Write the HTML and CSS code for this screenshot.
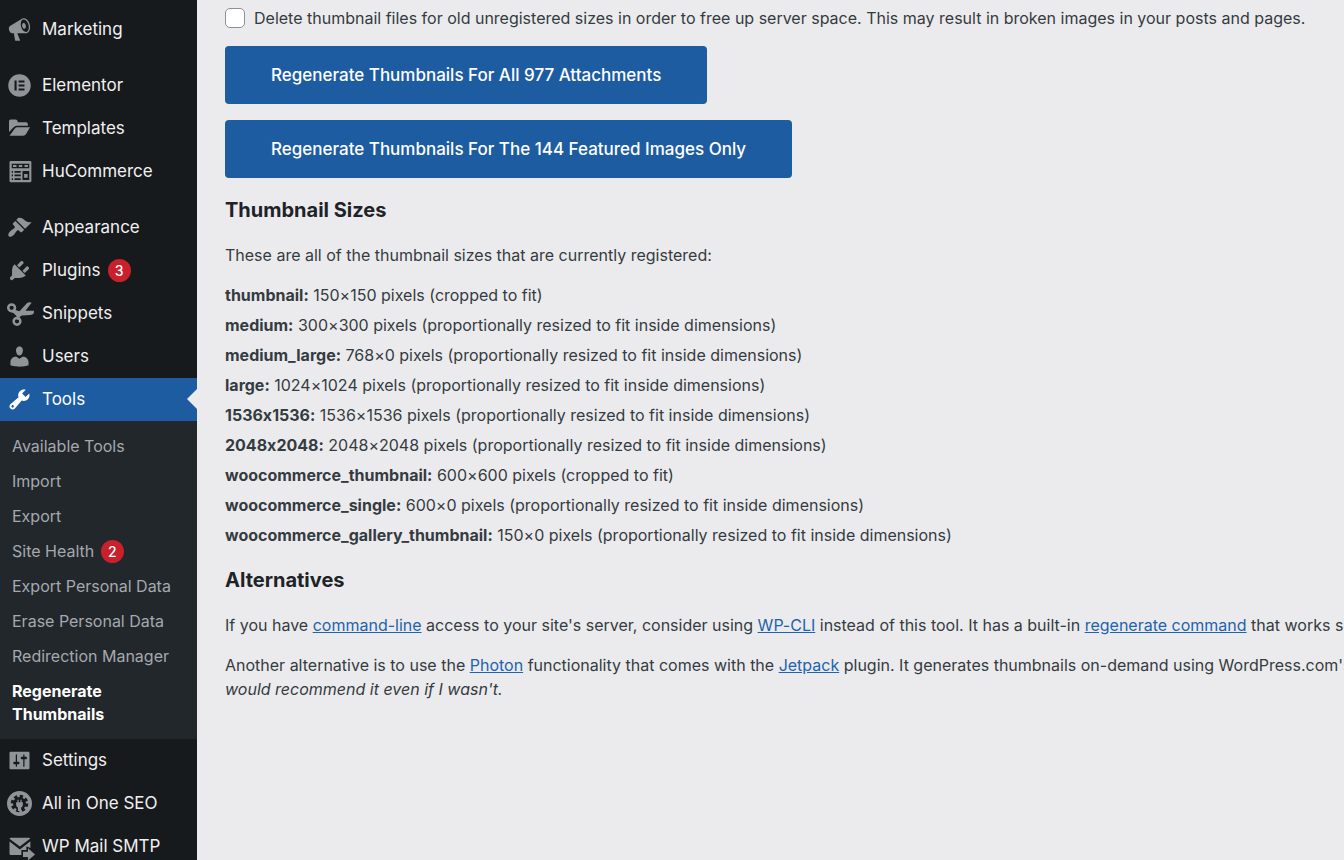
FILE: index.html
```
<!DOCTYPE html>
<html lang="en">
<head>
    <meta charset="UTF-8">
    <meta name="viewport" content="width=device-width, initial-scale=1.0">
    <title>Regenerate Thumbnails</title>
    <link rel="stylesheet" href="styles.css">
</head>
<body>
    <nav class="admin-menu">
        <a class="menu-item" href="#marketing">
            <svg class="icon" viewBox="0 0 20 20"><path d="M18.15 5.94c.46 1.62.38 3.22-.02 4.48-.42 1.28-1.26 2.18-2.3 2.48-.16.06-.26.06-.4.06-.06.02-.12.02-.18.02-.06.02-.14.02-.22.02h-6.8l2.22 5.5c.02.14-.06.26-.14.34-.08.1-.24.16-.34.16H6.95c-.1 0-.26-.06-.34-.16-.08-.08-.16-.2-.14-.34l-1-5.5H4.25l-.02-.02c-.5.06-1.08-.18-1.54-.62s-.88-1.08-1.06-1.88c-.24-.8-.2-1.56-.02-2.2.18-.62.58-1.08 1.06-1.3l.02-.02 9-5.4c.1-.06.18-.1.24-.16.06-.04.14-.08.24-.12.16-.08.28-.12.5-.18 1.04-.3 2.24.1 3.22.98s1.84 2.24 2.26 3.86zm-2.58 5.98h-.02c.4-.1.74-.34 1.04-.7.58-.7.86-1.76.86-3.04 0-.64-.1-1.3-.28-1.98-.34-1.36-1.02-2.5-1.78-3.24s-1.68-1.1-2.46-.88c-.82.22-1.4.96-1.7 2-.32 1.04-.28 2.36.06 3.72.38 1.36 1 2.5 1.8 3.24.78.74 1.62 1.1 2.48.88zm-2.54-7.08c.22-.04.42-.02.62.04.38.16.76.48 1.02 1s.42 1.2.42 1.78c0 .3-.04.56-.12.8-.18.48-.44.84-.86.94-.34.1-.8-.06-1.14-.4s-.64-.86-.78-1.5c-.18-.62-.12-1.24.02-1.72s.48-.84.82-.94z"/></svg>
            Marketing
        </a>

        <a class="menu-item group-start" href="#elementor">
            <svg class="icon" viewBox="0 0 20 20"><path fill-rule="evenodd" d="M10 1a9 9 0 1 0 0 18a9 9 0 0 0 0-18zM6 6h1.7v8H6zM9.3 6H14v1.6H9.3zM9.3 9.2H14v1.6H9.3zM9.3 12.4H14V14H9.3z"/></svg>
            Elementor
        </a>
        <a class="menu-item" href="#templates">
            <svg class="icon" viewBox="0 0 20 20"><path d="M1.6 12.8V4.2q0-1.4 1.4-1.4h3.9q1.3 0 1.5 1.2l.2.9h6.600q1.5 0 1.5 1.600v1.300H8q-1.800 0-2.900 1.400zM2 15.700l4.300-5.800q.7-.9 1.900-.9h10.200l-3 5.200q-.9 1.500-2.500 1.500z"/></svg>
            Templates
        </a>
        <a class="menu-item" href="#hucommerce">
            <svg class="icon" viewBox="0 0 20 20"><path fill-rule="evenodd" d="M3 1.500h15.500q1 0 1 1v15q0 1-1 1H3q-1 0-1-1v-15q0-1 1-1zM3.800 3.800v3.600h14V3.800zM3.800 9.500v1.400h1V9.500zM6 9.500v1.400h5V9.500zM3.800 12.400v1.400h1v-1.400zM6 12.400v1.400h5v-1.400zM3.800 15.300v1.400h1v-1.400zM6 15.300v1.400h5v-1.400zM12.400 9.500v7.200h5.400V9.500z"/><path d="M4.800 4.800h2.800v1.600H4.800zM9.400 4.800h2.800v1.600H9.400zM14 4.800h2.800v1.600H14zM13.700 12h2.800v3h-2.800z"/></svg>
            HuCommerce
        </a>

        <a class="menu-item group-start" href="#appearance">
            <svg class="icon" viewBox="0 0 20 20"><path d="M14.48 11.06L7.41 3.99l1.5-1.5c.5-.56 2.3-.47 3.51.32 1.21.8 1.43 1.28 2.91 2.1 1.18.64 2.45 1.26 4.45.85zm-.71.71L6.7 4.7 4.93 6.47c-.39.39-.39 1.02 0 1.41l1.06 1.06c.39.39.39 1.03 0 1.42-.6.6-1.43 1.11-2.21 1.69-.35.26-.7.53-1.01.84C1.43 14.23.4 16.08 1.4 17.07c.99 1 2.84-.03 4.18-1.36.31-.31.58-.66.85-1.02.57-.78 1.08-1.61 1.69-2.21.39-.39 1.02-.39 1.41 0l1.06 1.06c.39.39 1.02.39 1.41 0z"/></svg>
            Appearance
        </a>
        <a class="menu-item" href="#plugins">
            <svg class="icon" viewBox="0 0 20 20"><path d="M13.11 4.36L9.87 7.6 8 5.73l3.24-3.24c.35-.34 1.05-.2 1.56.32.52.51.66 1.21.31 1.55zm-8 1.77l.91-1.12 9.01 9.01-1.19.84c-.71.71-2.63 1.16-3.82 1.16H6.14L4.9 17.26c-.59.59-1.54.59-2.12 0-.59-.58-.59-1.53 0-2.12l1.24-1.24v-3.88c0-1.13.4-3.19 1.09-3.89zm7.26 3.97l3.24-3.24c.34-.35 1.04-.21 1.55.31.52.51.66 1.21.31 1.55l-3.24 3.25z"/></svg>
            Plugins <span class="badge">3</span>
        </a>
        <a class="menu-item" href="#snippets">
            <svg class="icon" viewBox="0 0 20 20"><circle class="ring" cx="3.700" cy="5.400" r="2.700"/><circle class="ring" cx="8" cy="16.200" r="2.700"/><path d="M5.500 6.800l4.500 1.400 5.700-6.200q1.600-1.500 4-.6l-4.900 6.400h6.700q.6 3-2.800 3.400l-6.900.3-1.900 1.500-.3 2-1.800-.3-.2-2.700-2.500-2.500-1.500-.6z"/></svg>
            Snippets
        </a>
        <a class="menu-item" href="#users">
            <svg class="icon" viewBox="0 0 20 20"><path d="M10 9.25c-2.27 0-2.73-3.44-2.73-3.44C7 4.02 7.82 2 9.97 2c2.16 0 2.98 2.02 2.71 3.81 0 0-.41 3.44-2.68 3.44zm0 2.57L12.72 10c2.39 0 4.52 2.33 4.52 4.53v2.49s-3.65 1.13-7.24 1.13c-3.65 0-7.24-1.13-7.24-1.13v-2.49c0-2.25 1.94-4.48 4.47-4.48z"/></svg>
            Users
        </a>
        <a class="menu-item current" href="#tools">
            <svg class="icon" viewBox="0 0 20 20"><path d="M16.68 9.77c-1.34 1.34-3.3 1.67-4.95.99l-5.41 6.52c-.99.99-2.59.99-3.58 0s-.99-2.59 0-3.57l6.52-5.42c-.68-1.65-.35-3.61.99-4.95 1.28-1.28 3.12-1.62 4.72-1.06l-2.89 2.89 2.82 2.82 2.86-2.87c.53 1.58.18 3.39-1.08 4.65zM3.81 16.21c.4.39 1.04.39 1.43 0 .4-.4.4-1.04 0-1.43-.39-.4-1.03-.4-1.43 0-.39.39-.39 1.03 0 1.43z"/></svg>
            Tools
        </a>
        <div class="submenu">
            <a href="#available">Available Tools</a>
            <a href="#import">Import</a>
            <a href="#export">Export</a>
            <a href="#health">Site Health <span class="badge">2</span></a>
            <a href="#export-data">Export Personal Data</a>
            <a href="#erase-data">Erase Personal Data</a>
            <a href="#redirection">Redirection Manager</a>
            <a class="active" href="#regenerate">Regenerate<br>Thumbnails</a>
        </div>
        <a class="menu-item" href="#settings">
            <svg class="icon" viewBox="0 0 20 20"><path d="M18 16V4c0-.55-.45-1-1-1H3c-.55 0-1 .45-1 1v12c0 .55.45 1 1 1h14c.55 0 1-.45 1-1zM8 11h1c.55 0 1 .45 1 1s-.45 1-1 1H8v1.5c0 .28-.22.5-.5.5s-.5-.22-.5-.5V13H6c-.55 0-1-.45-1-1s.45-1 1-1h1V5.5c0-.28.22-.5.5-.5s.5.22.5.5V11zm5-2h-1c-.55 0-1-.45-1-1s.45-1 1-1h1V5.5c0-.28.22-.5.5-.5s.5.22.5.5V7h1c.55 0 1 .45 1 1s-.45 1-1 1h-1v5.5c0 .28-.22.5-.5.5s-.5-.22-.5-.5V9z"/></svg>
            Settings
        </a>
        <a class="menu-item" href="#seo">
            <svg class="icon" viewBox="0 0 20 20"><circle cx="10" cy="10" r="10"/><circle class="cut" cx="10" cy="10" r="5.2"/><circle class="cut-ring" cx="10" cy="10" r="5.5"/><path d="M7.300 9h1V7h1v2h1.400V7h1v2h1v2q0 1.700-1.400 2.200V16H8.700v-2.800Q7.300 12.700 7.300 11z"/></svg>
            All in One SEO
        </a>
        <a class="menu-item" href="#smtp">
            <svg class="icon" viewBox="0 0 20 20"><path d="M3 3h14.500q.8 0 1.100.6L10.300 10 2 3.700Q2.300 3 3 3zM2 5.900l8.300 6.400L18.700 5.800v5.400l-3.200-1.400v3H11.500v4H3q-1 0-1-1z"/><path d="M12.800 14.200h4v-2.800l5.600 4.900-5.600 4.900v-2.800h-4z"/></svg>
            WP Mail SMTP
        </a>
    </nav>

    <main class="content">
        <div class="option">
            <input type="checkbox" id="deleteOld">
            <label for="deleteOld">Delete thumbnail files for old unregistered sizes in order to free up server space. This may result in broken images in your posts and pages.</label>
        </div>
        <button class="button" type="button">Regenerate Thumbnails For All 977 Attachments</button>
        <button class="button" type="button">Regenerate Thumbnails For The 144 Featured Images Only</button>

        <h2>Thumbnail Sizes</h2>
        <p>These are all of the thumbnail sizes that are currently registered:</p>
        <ul class="sizes">
            <li><strong>thumbnail:</strong> 150×150 pixels (cropped to fit)</li>
            <li><strong>medium:</strong> 300×300 pixels (proportionally resized to fit inside dimensions)</li>
            <li><strong>medium_large:</strong> 768×0 pixels (proportionally resized to fit inside dimensions)</li>
            <li><strong>large:</strong> 1024×1024 pixels (proportionally resized to fit inside dimensions)</li>
            <li><strong>1536x1536:</strong> 1536×1536 pixels (proportionally resized to fit inside dimensions)</li>
            <li><strong>2048x2048:</strong> 2048×2048 pixels (proportionally resized to fit inside dimensions)</li>
            <li><strong>woocommerce_thumbnail:</strong> 600×600 pixels (cropped to fit)</li>
            <li><strong>woocommerce_single:</strong> 600×0 pixels (proportionally resized to fit inside dimensions)</li>
            <li><strong>woocommerce_gallery_thumbnail:</strong> 150×0 pixels (proportionally resized to fit inside dimensions)</li>
        </ul>

        <h2>Alternatives</h2>
        <p>If you have <a href="#cli">command-line</a> access to your site's server, consider using <a href="#wp-cli">WP-CLI</a> instead of this tool. It has a built-in <a href="#command">regenerate command</a> that works similarly</p>
        <p>Another alternative is to use the <a href="#photon">Photon</a> functionality that comes with the <a href="#jetpack">Jetpack</a> plugin. It generates thumbnails on-demand using WordPress.com's<br><em>would recommend it even if I wasn't.</em></p>
    </main>
</body>
</html>
```
FILE: styles.css
```
/* Admin page layout */
body {
    margin: 0;
    display: flex;
    min-height: 100vh;
    font-family: Inter, "Liberation Sans", sans-serif;
    font-size: 16px;
    line-height: 24px;
    font-feature-settings: "calt" 0;
    color: #343b41;
    background-color: #ebebed;
    overflow: hidden;
}

/* Left menu */
.admin-menu {
    flex: 0 0 197px;
    box-sizing: border-box;
    height: 100vh;
    padding-top: 8px;
    background-color: #171a1d;
    overflow: hidden;
}

.menu-item {
    display: flex;
    align-items: center;
    box-sizing: border-box;
    height: 43px;
    padding: 0 0 1px 7px;
    color: #f0f0f1;
    font-size: 17px;
    text-decoration: none;
    white-space: nowrap;
    position: relative;
}

.group-start {
    margin-top: 13px;
}

.icon {
    width: 25px;
    height: 25px;
    margin-right: 10px;
    fill: #8f9499;
    overflow: visible;
}

.ring {
    fill: none;
    stroke: #8f9499;
    stroke-width: 2;
}

.cut {
    fill: #171a1d;
}

.cut-ring {
    fill: none;
    stroke: #171a1d;
    stroke-width: 3;
    stroke-dasharray: 2.5 1.82;
}

.current {
    color: #fff;
    background-color: #1e5ca1;
}

.current .icon {
    fill: #fff;
}

.current::after {
    content: "";
    position: absolute;
    right: 0;
    border: 10px solid transparent;
    border-left: 0;
    border-right-color: #ebebed;
}

.badge {
    display: inline-block;
    width: 23px;
    margin-left: 7px;
    border-radius: 12px;
    background-color: #ca202b;
    color: #fff;
    font-size: 14px;
    font-weight: 500;
    line-height: 23px;
    text-align: center;
}

.submenu {
    padding: 8px 0 7px;
    background-color: #22272b;
}

.submenu a {
    display: block;
    padding: 6px 12px;
    color: #a5a9ae;
    line-height: 23px;
    text-decoration: none;
    white-space: nowrap;
}

.submenu .badge {
    margin-left: 2px;
}

.submenu .active {
    color: #fff;
    font-weight: 700;
}

/* Page content */
.content {
    flex: 1;
    min-width: 0;
    padding: 6px 0 0 28px;
    white-space: nowrap;
}

.option {
    display: flex;
    align-items: center;
    gap: 9px;
    margin-bottom: 16px;
}

.option input {
    appearance: none;
    width: 20px;
    height: 20px;
    margin: 0;
    border: 1px solid #8c8f94;
    border-radius: 5px;
    background-color: #fff;
}

.button {
    display: block;
    height: 58px;
    margin-bottom: 16px;
    padding: 0 46px;
    border: none;
    border-radius: 4px;
    background-color: #1e5ca1;
    color: #fff;
    font-family: inherit;
    font-size: 17px;
    font-weight: 500;
    cursor: pointer;
}

h2 {
    margin: 0 0 16px;
    color: #1d2327;
    font-size: 20px;
    font-weight: 700;
    line-height: 33px;
}

p {
    margin: 0 0 16px;
}

.content a {
    color: #1e63ad;
}

.sizes {
    margin: 0 0 17px;
    padding: 0;
    list-style: none;
}

.sizes li {
    margin-bottom: 6px;
}

.sizes li:last-child {
    margin-bottom: 0;
}

strong {
    font-weight: 700;
}
```
